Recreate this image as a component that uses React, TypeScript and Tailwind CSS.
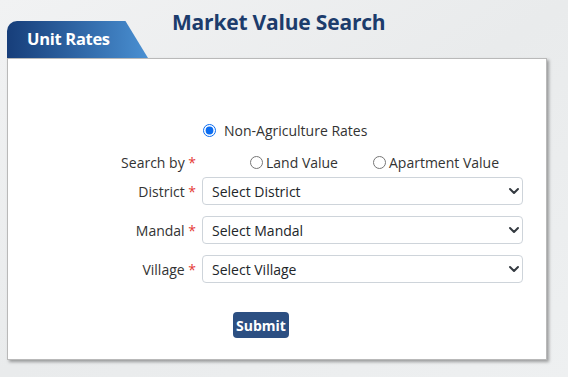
import { ChevronDown } from 'lucide-react'

const FIELDS = [
  { label: 'District', placeholder: 'Select District' },
  { label: 'Mandal', placeholder: 'Select Mandal' },
  { label: 'Village', placeholder: 'Select Village' },
]

function Label({ text }: { text: string }) {
  return (
    <div className="w-[194px] shrink-0 pr-[6px] text-right text-[14px] text-[#333]">
      {text} <span className="text-[#e53935]">*</span>
    </div>
  )
}

export default function App() {
  return (
    <div
      className="w-[568px] h-[377px] overflow-hidden bg-gradient-to-br from-[#f1f2f3] via-[#e9ebec] to-[#eef0f1]"
      style={{ fontFamily: '"Open Sans", "Noto Sans", sans-serif' }}
    >
      {/* header */}
      <div className="flex h-[58px]">
        <div
          className="self-end ml-[7px] w-[141px] h-[37px] rounded-tl-[10px] bg-gradient-to-r from-[#173e7a] to-[#4a90d2] pl-[20px] flex items-center"
          style={{ clipPath: 'polygon(0 0, 84% 0, 100% 100%, 0 100%)' }}
        >
          <span className="text-white font-bold text-[16.5px] tracking-[-0.3px]">Unit Rates</span>
        </div>
        <h1 className="self-start mt-[7px] ml-[24px] text-[21px] font-bold text-[#1c3c6c] tracking-[-0.2px]">
          Market Value Search
        </h1>
      </div>

      {/* card */}
      <div className="ml-[7px] w-[540px] h-[302px] bg-white border border-[#b9b9b9] shadow-[2px_2px_3px_rgba(0,0,0,0.35)]">
        <div className="flex flex-col pt-[61px]">
          <div className="flex h-[20px] items-center">
            <div className="w-[195px] shrink-0" />
            <label className="flex items-center gap-[8px] text-[14px] text-[#333]">
              <input type="radio" name="rate" defaultChecked className="w-[13px] h-[13px] m-0 accent-[#0b6cf0]" />
              Non-Agriculture Rates
            </label>
          </div>

          <div className="flex h-[20px] items-center mt-[12px]">
            <Label text="Search by" />
            <div className="flex items-center pl-[48px] text-[14px] text-[#333]">
              <label className="flex items-center gap-[3px]">
                <input type="radio" name="by" className="w-[13px] h-[13px] m-0 accent-[#0b6cf0]" />
                Land Value
              </label>
              <label className="flex items-center gap-[3px] ml-[35px]">
                <input type="radio" name="by" className="w-[13px] h-[13px] m-0 accent-[#0b6cf0]" />
                Apartment Value
              </label>
            </div>
          </div>

          {FIELDS.map((f, i) => (
            <div key={f.label} className={`flex h-[28px] items-center ${i === 0 ? 'mt-[5px]' : 'mt-[11px]'}`}>
              <Label text={f.label} />
              <div className="relative w-[321px] h-[28px]">
                <select className="appearance-none w-full h-full rounded-[4px] border border-[#ced4da] bg-white pl-[9px] text-[14px] text-[#212529] outline-none">
                  <option>{f.placeholder}</option>
                </select>
                <ChevronDown size={16} strokeWidth={3} className="absolute right-[1px] top-[6px] text-[#343a40] pointer-events-none" />
              </div>
            </div>
          ))}

          <div className="flex mt-[29px] pl-[225px]">
            <button className="w-[56px] h-[26px] rounded-[4px] bg-[#2c4f82] text-white text-[14px] font-bold">
              Submit
            </button>
          </div>
        </div>
      </div>
    </div>
  )
}
